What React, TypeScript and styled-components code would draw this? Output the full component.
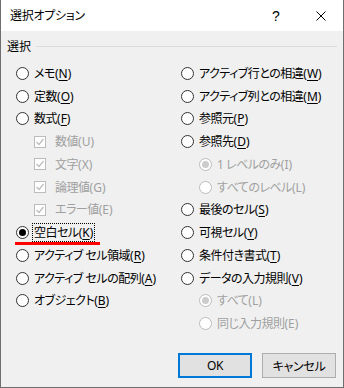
import styled, { createGlobalStyle, css } from "styled-components";

const GlobalStyle = createGlobalStyle`
  html, body {
    margin: 0;
    padding: 0;
    background: #ffffff;
  }
  body {
    font-family: "Noto Sans", "Noto Sans CJK JP", sans-serif;
    font-feature-settings: "palt";
  }
`;

const ROW_HEIGHT = 22.75;

const Window = styled.div`
  width: 344px;
  height: 388px;
  box-sizing: border-box;
  border: 1px solid #6f6f6f;
  border-top: none;
  background: #f0f0f0;
  display: flex;
  flex-direction: column;
  color: #000;
  font-size: 12px;
`;

const TitleBar = styled.div`
  height: 31px;
  flex-shrink: 0;
  background: #ffffff;
  display: flex;
  align-items: center;
  padding-left: 9px;
`;

const Title = styled.div`
  flex-grow: 1;
  font-size: 12px;
  letter-spacing: -0.3px;
  line-height: 1;
`;

const HelpButton = styled.div`
  width: 20px;
  font-family: "Liberation Sans", sans-serif;
  font-size: 14px;
  text-align: center;
  margin-right: 30px;
  line-height: 1;
`;

const CloseButton = styled.div`
  width: 10px;
  height: 10px;
  margin-right: 17px;
  display: flex;
`;

const Body = styled.div`
  flex-grow: 1;
  display: flex;
  flex-direction: column;
`;

const GroupHeader = styled.div`
  margin-top: 7px;
  height: 18px;
  display: flex;
  align-items: center;
  padding-left: 6px;
  padding-right: 6px;
  gap: 5px;
`;

const GroupLabel = styled.span`
  line-height: 1;
`;

const GroupLine = styled.div`
  flex-grow: 1;
  height: 1px;
  margin-top: -1px;
  background: #dcdcdc;
`;

const Columns = styled.div`
  display: grid;
  grid-template-columns: 165px 1fr;
  padding: 6px 0 0 15px;
`;

const Column = styled.div`
  display: flex;
  flex-direction: column;
`;

const Row = styled.div<{ $indent?: boolean; $disabled?: boolean }>`
  position: relative;
  height: ${ROW_HEIGHT}px;
  display: flex;
  align-items: center;
  gap: 4px;
  padding-left: ${(p) => (p.$indent ? 18 : 0)}px;
  color: ${(p) => (p.$disabled ? "#a0a0a0" : "#000")};
  white-space: nowrap;
`;

const RadioCircle = styled.span<{ $checked?: boolean; $disabled?: boolean }>`
  width: 13px;
  height: 13px;
  box-sizing: border-box;
  border-radius: 50%;
  border: 1px solid ${(p) => (p.$disabled ? "#bcbcbc" : "#333333")};
  background: #ffffff;
  flex-shrink: 0;
  display: flex;
  align-items: center;
  justify-content: center;

  ${(p) =>
    p.$checked &&
    css`
      &::after {
        content: "";
        width: 7px;
        height: 7px;
        border-radius: 50%;
        background: ${p.$disabled ? "#cccccc" : "#000000"};
      }
    `}
`;

const CheckBox = styled.span`
  width: 12px;
  height: 12px;
  box-sizing: border-box;
  border: 1px solid #bcbcbc;
  background: #ffffff;
  flex-shrink: 0;
  display: flex;
  align-items: center;
  justify-content: center;
  margin-right: 4px;
`;

const Label = styled.span<{ $focused?: boolean }>`
  line-height: 17px;
  padding: 0 1px;
  outline: ${(p) => (p.$focused ? "1px dotted #000" : "none")};
  outline-offset: 0;
`;

const Text = styled.span`
  letter-spacing: -0.5px;
`;

const Key = styled.span<{ $plain?: boolean }>`
  text-decoration: ${(p) => (p.$plain ? "none" : "underline")};
  text-underline-offset: 2px;
`;

const RedMark = styled.div`
  position: absolute;
  left: -1px;
  top: 21px;
  width: 85px;
  height: 3px;
  background: #ff0000;
`;

const Footer = styled.div`
  margin-top: auto;
  display: flex;
  justify-content: flex-end;
  gap: 10px;
  padding: 0 7px 9px 0;
`;

const Button = styled.button<{ $primary?: boolean }>`
  width: 74px;
  height: 25px;
  box-sizing: border-box;
  font-family: inherit;
  font-feature-settings: "palt";
  font-size: 12px;
  letter-spacing: -0.3px;
  color: #000;
  background: #e1e1e1;
  border: ${(p) => (p.$primary ? "2px solid #0078d7" : "1px solid #adadad")};
  padding: 0;
`;

type Item = {
  text: string;
  key: string;
  kind: "radio" | "check";
  checked?: boolean;
  disabled?: boolean;
  indent?: boolean;
  focused?: boolean;
};

const left: Item[] = [
  { text: "メモ", key: "N", kind: "radio" },
  { text: "定数", key: "O", kind: "radio" },
  { text: "数式", key: "F", kind: "radio" },
  { text: "数値", key: "U", kind: "check", checked: true, disabled: true, indent: true },
  { text: "文字", key: "X", kind: "check", checked: true, disabled: true, indent: true },
  { text: "論理値", key: "G", kind: "check", checked: true, disabled: true, indent: true },
  { text: "エラー値", key: "E", kind: "check", checked: true, disabled: true, indent: true },
  { text: "空白セル", key: "K", kind: "radio", checked: true, focused: true },
  { text: "アクティブ セル領域", key: "R", kind: "radio" },
  { text: "アクティブ セルの配列", key: "A", kind: "radio" },
  { text: "オブジェクト", key: "B", kind: "radio" },
];

const right: Item[] = [
  { text: "アクティブ行との相違", key: "W", kind: "radio" },
  { text: "アクティブ列との相違", key: "M", kind: "radio" },
  { text: "参照元", key: "P", kind: "radio" },
  { text: "参照先", key: "D", kind: "radio" },
  { text: "1 レベルのみ", key: "I", kind: "radio", checked: true, disabled: true, indent: true },
  { text: "すべてのレベル", key: "L", kind: "radio", disabled: true, indent: true },
  { text: "最後のセル", key: "S", kind: "radio" },
  { text: "可視セル", key: "Y", kind: "radio" },
  { text: "条件付き書式", key: "T", kind: "radio" },
  { text: "データの入力規則", key: "V", kind: "radio" },
  { text: "すべて", key: "L", kind: "radio", checked: true, disabled: true, indent: true },
  { text: "同じ入力規則", key: "E", kind: "radio", disabled: true, indent: true },
];

function CheckMark() {
  return (
    <svg width="10" height="10" viewBox="0 0 10 10">
      <path d="M1.5 5 L4 7.5 L8.5 2" fill="none" stroke="#bcbcbc" strokeWidth="1.2" />
    </svg>
  );
}

function OptionRow({ item }: { item: Item }) {
  return (
    <Row $indent={item.indent} $disabled={item.disabled}>
      {item.kind === "radio" ? (
        <RadioCircle $checked={item.checked} $disabled={item.disabled} />
      ) : (
        <CheckBox>{item.checked && <CheckMark />}</CheckBox>
      )}
      <Label $focused={item.focused}>
        <Text>{item.text}</Text>(<Key $plain={item.disabled}>{item.key}</Key>)
      </Label>
      {item.focused && <RedMark />}
    </Row>
  );
}

export default function App() {
  return (
    <>
      <GlobalStyle />
      <Window>
        <TitleBar>
          <Title>選択オプション</Title>
          <HelpButton>?</HelpButton>
          <CloseButton>
            <svg width="10" height="10" viewBox="0 0 10 10">
              <path d="M0.5 0.5 L9.5 9.5 M9.5 0.5 L0.5 9.5" stroke="#000" strokeWidth="1" />
            </svg>
          </CloseButton>
        </TitleBar>
        <Body>
          <GroupHeader>
            <GroupLabel>選択</GroupLabel>
            <GroupLine />
          </GroupHeader>
          <Columns>
            <Column>
              {left.map((item, i) => (
                <OptionRow key={i} item={item} />
              ))}
            </Column>
            <Column>
              {right.map((item, i) => (
                <OptionRow key={i} item={item} />
              ))}
            </Column>
          </Columns>
          <Footer>
            <Button $primary>OK</Button>
            <Button>キャンセル</Button>
          </Footer>
        </Body>
      </Window>
    </>
  );
}
